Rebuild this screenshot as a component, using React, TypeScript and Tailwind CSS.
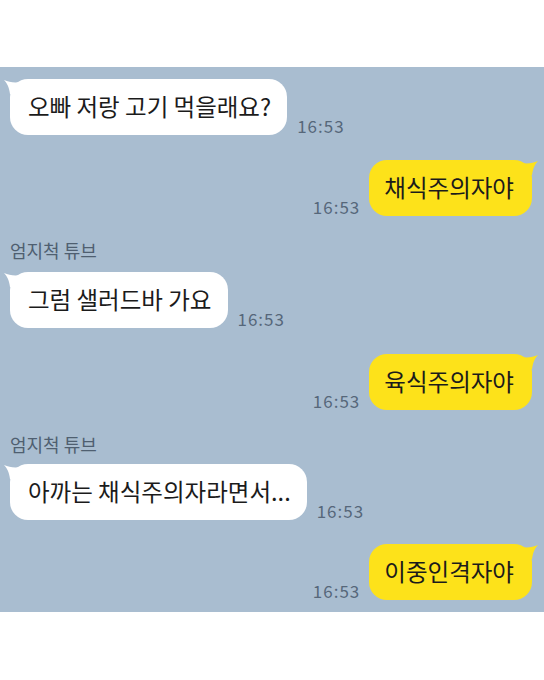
import React, { ReactNode } from 'react';

const font = { fontFamily: '"Noto Sans CJK KR", "Noto Sans", sans-serif' };

const Time: React.FC = () => (
  <span className="text-[17px] leading-[20px] tracking-[1px] text-[#56677a] -mb-[1px]" style={font}>16:53</span>
);

const LeftTail = () => (
  <svg className="absolute -left-[6px] top-[1px]" width="16" height="14" viewBox="0 0 16 14">
    <path d="M16 2 C10 3 5 2 0 0 C3 3 5 7 6 14 L16 14 Z" fill="#ffffff" />
  </svg>
);

const RightTail = () => (
  <svg className="absolute -right-[6px] top-[1px]" width="16" height="14" viewBox="0 0 16 14">
    <path d="M0 2 C6 3 11 2 16 0 C13 3 11 7 10 14 L0 14 Z" fill="#fde21a" />
  </svg>
);

interface RowProps {
  text: string;
  className?: string;
}

const Received: React.FC<RowProps> = ({ text, className = '' }) => (
  <div className={`flex items-end gap-[10px] pl-[10px] ${className}`}>
    <div className="relative h-[56px] flex items-center pl-[18px] pr-[16px] bg-white rounded-[18px] text-[23.5px] text-[#1b1b1b]" style={font}>
      <LeftTail />
      <span className="relative">{text}</span>
    </div>
    <Time />
  </div>
);

const Sent: React.FC<RowProps> = ({ text, className = '' }) => (
  <div className={`flex items-end justify-end gap-[9px] pr-[12px] ${className}`}>
    <Time />
    <div className="relative h-[56px] flex items-center pl-[15px] pr-[18px] bg-[#fde21a] rounded-[18px] text-[23.5px] text-[#1b1b1b]" style={font}>
      <RightTail />
      <span className="relative">{text}</span>
    </div>
  </div>
);

const Name: React.FC<{ children: ReactNode; className?: string }> = ({ children, className = '' }) => (
  <div className={`pl-[10px] text-[18px] leading-[24px] text-[#4f5f70] ${className}`} style={font}>{children}</div>
);

export default function App() {
  return (
    <div className="w-[544px] h-[680px] bg-white">
      <div className="h-[67px]" />
      <div className="bg-[#a9bdd0] pt-[12px] pb-[12px] flex flex-col">
        <Received text="오빠 저랑 고기 먹을래요?" />
        <Sent text="채식주의자야" className="mt-[25px]" />
        <Name className="mt-[22px]">엄지척 튜브</Name>
        <Received text="그럼 샐러드바 가요" className="mt-[10px]" />
        <Sent text="육식주의자야" className="mt-[26px]" />
        <Name className="mt-[22px]">엄지척 튜브</Name>
        <Received text="아까는 채식주의자라면서..." className="mt-[8px]" />
        <Sent text="이중인격자야" className="mt-[24px]" />
      </div>
    </div>
  );
}
